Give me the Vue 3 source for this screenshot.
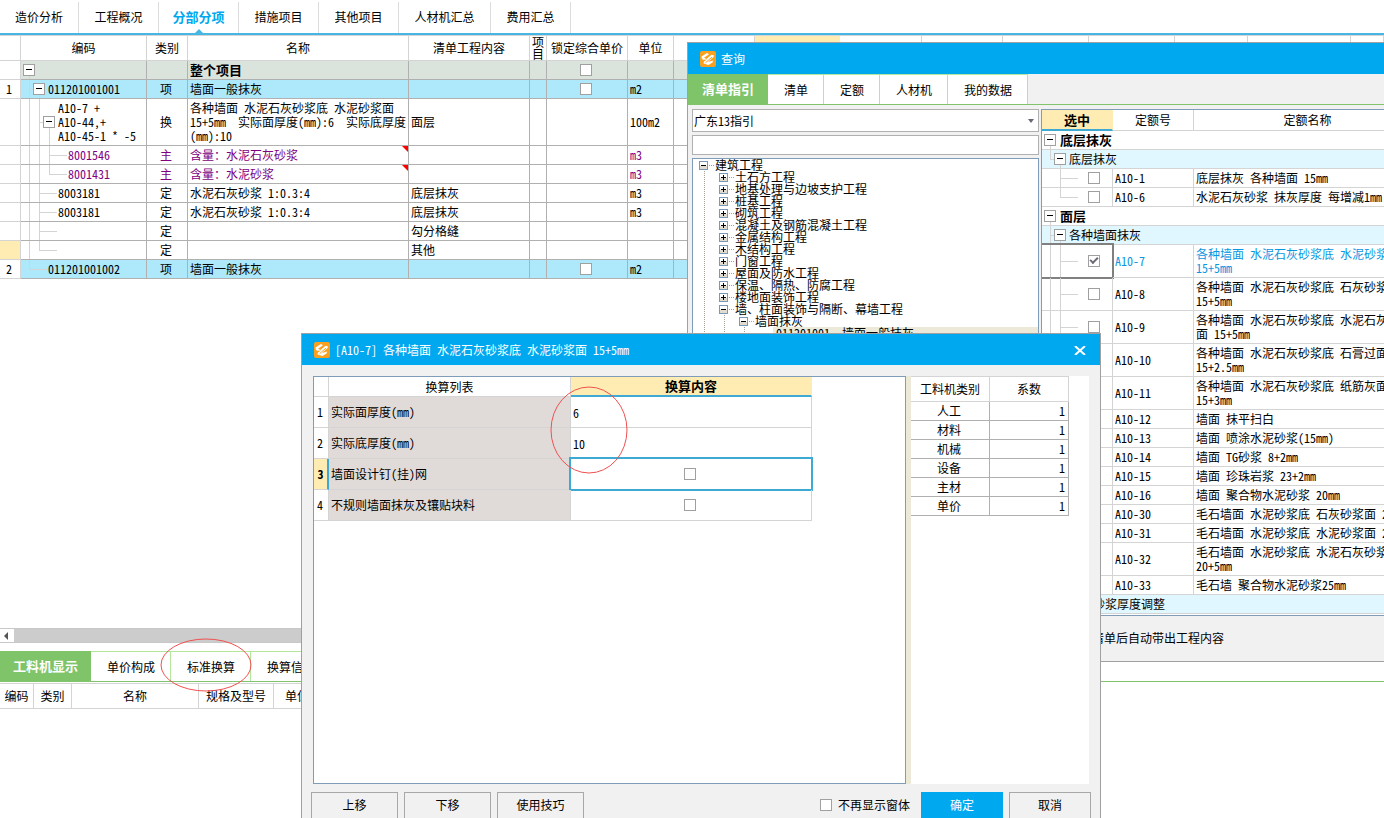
<script setup>
import { ref } from 'vue'

const mainTabs = ['造价分析', '工程概况', '分部分项', '措施项目', '其他项目', '人材机汇总', '费用汇总']
const mainCols = [21, 126, 41, 221, 121, 17, 81, 46, 81, 85, 82, 81, 86, 86, 73, 103]
const mainHeads = ['', '编码', '类别', '名称', '清单工程内容', '项目', '锁定综合单价', '单位', '', '', '', '', '', '', '', '', '']

// guides: [x, 'full' | 'half' | 'low']; branch: [x, width]; box: x of the expander; pad: x of the text
const mainRows = [
  { kind: 'total', no: '', code: '', type: '', name: '整个项目', work: '', lock: true, unit: '', guides: [[8, 'low']], box: 2, pad: 17 },
  { kind: 'item', no: '1', code: '011201001001', type: '项', name: '墙面一般抹灰', work: '', lock: true, unit: 'm2', guides: [[8, 'full'], [18, 'low']], branch: [8, 4], box: 12, pad: 27 },
  { kind: 'tall', no: '', code: 'A10-7 +\nA10-44,+\nA10-45-1 * -5', type: '换', name: '各种墙面 水泥石灰砂浆底 水泥砂浆面\n15+5mm  实际面厚度(mm):6  实际底厚度\n(mm):10', work: '面层', unit: '100m2', guides: [[8, 'full'], [18, 'full'], [28, 'low']], branch: [18, 4], box: 22, pad: 37 },
  { kind: 'main', no: '', code: '8001546', type: '主', name: '含量：水泥石灰砂浆', work: '', unit: 'm3', flag: true, guides: [[8, 'full'], [18, 'full'], [28, 'full']], branch: [28, 18], pad: 47 },
  { kind: 'main', no: '', code: '8001431', type: '主', name: '含量：水泥砂浆', work: '', unit: 'm3', flag: true, guides: [[8, 'full'], [18, 'full'], [28, 'half']], branch: [28, 18], pad: 47 },
  { kind: '', no: '', code: '8003181', type: '定', name: '水泥石灰砂浆 1:0.3:4', work: '底层抹灰', unit: 'm3', guides: [[8, 'full'], [18, 'full']], branch: [18, 18], pad: 37 },
  { kind: '', no: '', code: '8003181', type: '定', name: '水泥石灰砂浆 1:0.3:4', work: '底层抹灰', unit: 'm3', guides: [[8, 'full'], [18, 'full']], branch: [18, 18], pad: 37 },
  { kind: '', no: '', code: '', type: '定', name: '', work: '勾分格缝', unit: '', guides: [[8, 'full'], [18, 'full']], branch: [18, 18], pad: 37 },
  { kind: 'current', no: '', code: '', type: '定', name: '', work: '其他', unit: '', guides: [[8, 'full'], [18, 'half']], branch: [18, 18], pad: 37 },
  { kind: 'item', no: '2', code: '011201001002', type: '项', name: '墙面一般抹灰', work: '', lock: true, unit: 'm2', guides: [[8, 'half']], branch: [8, 18], pad: 27 },
]

const detailTabs = ['工料机显示', '单价构成', '标准换算', '换算信息']
const detailCols = [34, 38, 127, 75, 47]
const detailHeads = ['编码', '类别', '名称', '规格及型号', '单位', '']

const queryTabs = ['清单指引', '清单', '定额', '人材机', '我的数据']
const keyword = ref('')
const guideTree = [
  { level: 0, text: '建筑工程', sign: '-' },
  ...['土石方工程', '地基处理与边坡支护工程', '桩基工程', '砌筑工程', '混凝土及钢筋混凝土工程', '金属结构工程', '木结构工程', '门窗工程', '屋面及防水工程', '保温、隔热、防腐工程', '楼地面装饰工程']
    .map((text) => ({ level: 1, text, sign: '+' })),
  { level: 1, text: '墙、柱面装饰与隔断、幕墙工程', sign: '-' },
  { level: 2, text: '墙面抹灰', sign: '-' },
  { level: 3, text: '011201001  墙面一般抹灰', sign: '' },
]

const quota = (code, name, extra = {}) => ({ code, name, guides: [[8, 'full'], [18, 'full']], ...extra })
const quotaRows = [
  { section: '底层抹灰' },
  { group: '底层抹灰', guides: [[8, 'half'], [18, 'low']] },
  quota('A10-1', '底层抹灰 各种墙面 15mm', { guides: [[18, 'full']] }),
  quota('A10-6', '水泥石灰砂浆 抹灰厚度 每增减1mm', { guides: [[18, 'half']] }),
  { section: '面层' },
  { group: '各种墙面抹灰', guides: [[8, 'full'], [18, 'low']] },
  quota('A10-7', '各种墙面 水泥石灰砂浆底 水泥砂浆面\n15+5mm', { checked: true }),
  quota('A10-8', '各种墙面 水泥石灰砂浆底 石灰砂浆面\n15+5mm'),
  quota('A10-9', '各种墙面 水泥石灰砂浆底 水泥石灰砂浆\n面 15+5mm'),
  quota('A10-10', '各种墙面 水泥石灰砂浆底 石膏过面\n15+2.5mm'),
  quota('A10-11', '各种墙面 水泥石灰砂浆底 纸筋灰面\n15+3mm'),
  quota('A10-12', '墙面 抹平扫白'),
  quota('A10-13', '墙面 喷涂水泥砂浆(15mm)'),
  quota('A10-14', '墙面 TG砂浆 8+2mm'),
  quota('A10-15', '墙面 珍珠岩浆 23+2mm'),
  quota('A10-16', '墙面 聚合物水泥砂浆 20mm'),
  quota('A10-30', '毛石墙面 水泥砂浆底 石灰砂浆面 20mm'),
  quota('A10-31', '毛石墙面 水泥砂浆底 水泥砂浆面 20mm'),
  quota('A10-32', '毛石墙面 水泥砂浆底 水泥石灰砂浆面\n20+5mm'),
  quota('A10-33', '毛石墙 聚合物水泥砂浆25mm', { guides: [[8, 'full'], [18, 'half']] }),
  { group: '砂浆厚度调整', guides: [[8, 'full'], [18, 'low']], late: true },
]

const convertRows = ref([
  { label: '实际面厚度(mm)', value: '6' },
  { label: '实际底厚度(mm)', value: '10' },
  { label: '墙面设计钉(挂)网', check: true, current: true },
  { label: '不规则墙面抹灰及镶贴块料', check: true },
])
const factors = ['人工', '材料', '机械', '设备', '主材', '单价']
</script>

<template>
  <div class="app">
    <nav class="main-tabs">
      <a v-for="(t, i) in mainTabs" :key="t" href="#" :class="{ on: i === 2, wide: i === 5 }">{{ t }}</a>
    </nav>

    <main class="upper">
      <table class="grid main-grid">
        <colgroup>
          <col v-for="(w, i) in mainCols" :key="i" :style="{ width: w + 'px' }" />
          <col />
        </colgroup>
        <thead>
          <tr>
            <th v-for="(h, i) in mainHeads" :key="i" :class="{ hot: i === 9 }">{{ h }}</th>
          </tr>
        </thead>
        <tbody>
          <tr v-for="(r, i) in mainRows" :key="i" :class="r.kind">
            <td class="no">{{ r.no }}</td>
            <td class="tree-cell">
              <svg class="guides" aria-hidden="true">
                <rect v-for="g in r.guides" :key="g[0]" :x="g[0]" :y="g[1] === 'low' ? '50%' : 0" width="1" :height="g[1] === 'full' ? '100%' : '50%'" />
                <rect v-if="r.branch" :x="r.branch[0]" y="50%" :width="r.branch[1]" height="1" />
              </svg>
              <button v-if="r.box" class="expander" aria-label="折叠" :style="{ left: r.box + 'px' }"></button>
              <div class="code" :style="{ paddingLeft: r.pad + 'px' }">{{ r.code }}</div>
            </td>
            <td class="mid">{{ r.type }}</td>
            <td class="name">{{ r.name }}<i v-if="r.flag" class="flag"></i></td>
            <td>{{ r.work }}</td>
            <td></td>
            <td class="mid"><input v-if="r.lock" type="checkbox" class="cb" aria-label="锁定综合单价" /></td>
            <td>{{ r.unit }}</td>
            <td v-for="n in 9" :key="n"></td>
          </tr>
        </tbody>
      </table>
    </main>

    <div class="hscroll">
      <button aria-label="向左滚动"><svg width="6" height="8" viewBox="0 0 6 8"><path d="M5 0v8L1 4z" fill="#555" /></svg></button>
      <div class="thumb"></div>
    </div>

    <section class="lower">
      <nav class="green-tabs">
        <a v-for="(t, i) in detailTabs" :key="t" href="#" :class="{ on: i === 0 }">{{ t }}</a>
        <span class="fill"></span>
      </nav>
      <table class="grid detail-grid">
        <colgroup>
          <col v-for="(w, i) in detailCols" :key="i" :style="{ width: w + 'px' }" />
          <col />
        </colgroup>
        <thead>
          <tr><th v-for="h in detailHeads" :key="h">{{ h }}</th></tr>
        </thead>
      </table>
    </section>

    <section class="window query">
      <header class="titlebar">
        <svg class="logo" width="16" height="16" viewBox="0 0 16 16" aria-hidden="true">
          <rect width="16" height="16" rx="2" fill="#f9a01f" />
          <path d="M1.500 5.500 7 2l2 1.200-5 3.600L6.500 8 11.500 3.800 14 4.500 13.500 6 8 11 13.200 9.500 12.500 11.500 8.500 14 3.500 12.500 4 10.500 7 8.500 3 8.800 1.800 7.500z" fill="#fff" />
          <path d="M5.500 11.800 12 6" stroke="#f9a01f" stroke-width="1" fill="none" />
        </svg>
        <span>查询</span>
      </header>
      <nav class="green-tabs">
        <a v-for="(t, i) in queryTabs" :key="t" href="#" :class="{ on: i === 0 }">{{ t }}</a>
      </nav>
      <div class="query-body">
        <div class="guide-pane">
          <div class="combo">
            <select aria-label="指引"><option>广东13指引</option></select>
            <svg width="6" height="4" viewBox="0 0 6 4" aria-hidden="true"><path d="M0 0h6L3 4z" fill="#666a73" /></svg>
          </div>
          <input v-model="keyword" class="search" type="text" aria-label="查找" />
          <ul class="guide-tree">
            <li v-for="n in guideTree" :key="n.text" :class="'l' + n.level">
              <svg class="dots" aria-hidden="true">
                <line v-for="k in n.level" :key="k" :x1="k * 20 - 9" :x2="k * 20 - 9" y1="0" y2="12" />
                <line v-if="n.sign" :x1="n.level * 20 + 16" :x2="n.level * 20 + 21" y1="6" y2="6" />
              </svg>
              <svg v-if="n.sign" class="sign" width="9" height="9" viewBox="0 0 9 9" shape-rendering="crispEdges" aria-hidden="true">
                <rect width="9" height="9" fill="#7898b5" />
                <rect x="1" y="1" width="7" height="4" fill="#fff" />
                <rect x="1" y="5" width="7" height="3" fill="#e0ddd0" />
                <rect x="2" y="4" width="5" height="1" />
                <rect v-if="n.sign === '+'" x="4" y="2" width="1" height="5" />
              </svg>
              <span>{{ n.text }}</span>
            </li>
          </ul>
        </div>
        <div class="quota-pane">
          <table class="grid quota-grid">
            <colgroup><col class="c1" /><col class="c2" /><col /></colgroup>
            <thead>
              <tr><th class="hot">选中</th><th>定额号</th><th>定额名称</th></tr>
            </thead>
            <tbody>
              <template v-for="(r, i) in quotaRows" :key="i">
                <tr v-if="r.section" class="section">
                  <td colspan="3" class="tree-cell">
                    <svg class="guides" aria-hidden="true"><rect x="8" y="50%" width="1" height="50%" /></svg>
                    <button class="expander" aria-label="折叠"></button>
                    <b>{{ r.section }}</b>
                  </td>
                </tr>
                <tr v-else-if="r.group" class="group">
                  <td colspan="3" class="tree-cell" :class="{ late: r.late }">
                    <svg class="guides" aria-hidden="true">
                      <rect v-for="g in r.guides" :key="g[0]" :x="g[0]" :y="g[1] === 'low' ? '50%' : 0" width="1" :height="g[1] === 'full' ? '100%' : '50%'" />
                      <rect x="8" y="50%" width="4" height="1" />
                    </svg>
                    <button class="expander" aria-label="折叠"></button>
                    <span>{{ r.group }}</span>
                  </td>
                </tr>
                <tr v-else :class="{ double: r.name.includes('\n'), picked: r.checked }">
                  <td class="tree-cell pick">
                    <svg class="guides" aria-hidden="true">
                      <rect v-for="g in r.guides" :key="g[0]" :x="g[0]" y="0" width="1" :height="g[1] === 'full' ? '100%' : '50%'" />
                      <rect x="18" y="50%" width="18" height="1" />
                    </svg>
                    <input type="checkbox" class="cb" :checked="r.checked" :aria-label="r.code" />
                  </td>
                  <td>{{ r.code }}</td>
                  <td>{{ r.name }}</td>
                </tr>
              </template>
            </tbody>
          </table>
        </div>
      </div>
      <footer class="query-foot">清单后自动带出工程内容</footer>
    </section>

    <section class="window dialog">
      <header class="titlebar">
        <svg class="logo" width="16" height="16" viewBox="0 0 16 16" aria-hidden="true">
          <rect width="16" height="16" rx="2" fill="#f9a01f" />
          <path d="M1.500 5.500 7 2l2 1.200-5 3.600L6.500 8 11.500 3.800 14 4.500 13.500 6 8 11 13.200 9.500 12.500 11.500 8.500 14 3.500 12.500 4 10.500 7 8.500 3 8.800 1.800 7.500z" fill="#fff" />
          <path d="M5.500 11.800 12 6" stroke="#f9a01f" stroke-width="1" fill="none" />
        </svg>
        <span>[A10-7] 各种墙面 水泥石灰砂浆底 水泥砂浆面 15+5mm</span>
        <button class="close" aria-label="关闭">
          <svg width="12" height="9" viewBox="0 0 12 9"><path d="M1 0 11 9M11 0 1 9" stroke="#fff" stroke-width="2" /></svg>
        </button>
      </header>
      <div class="dialog-body">
        <div class="convert-pane">
          <table class="grid convert-grid">
            <colgroup><col class="c1" /><col class="c2" /><col class="c3" /></colgroup>
            <thead>
              <tr><th></th><th>换算列表</th><th class="hot">换算内容</th></tr>
            </thead>
            <tbody>
              <tr v-for="(r, i) in convertRows" :key="i" :class="{ current: r.current }">
                <td class="no">{{ i + 1 }}</td>
                <td class="label"><label :for="'conv' + i">{{ r.label }}</label></td>
                <td class="value" :class="{ mid: r.check }">
                  <input v-if="r.check" :id="'conv' + i" type="checkbox" class="cb" />
                  <input v-else :id="'conv' + i" v-model="r.value" type="text" />
                </td>
              </tr>
            </tbody>
          </table>
        </div>
        <div class="factor-pane">
          <table class="grid factor-grid">
            <thead><tr><th>工料机类别</th><th>系数</th></tr></thead>
            <tbody>
              <tr v-for="f in factors" :key="f"><td class="mid">{{ f }}</td><td class="num">1</td></tr>
            </tbody>
          </table>
        </div>
      </div>
      <footer class="dialog-foot">
        <button>上移</button>
        <button>下移</button>
        <button>使用技巧</button>
        <label><input type="checkbox" class="cb" />不再显示窗体</label>
        <button class="ok">确定</button>
        <button class="cancel">取消</button>
      </footer>
    </section>

    <svg class="ring ring-tab" viewBox="0 0 92 56" aria-hidden="true"><ellipse cx="46" cy="28" rx="45" ry="26" /></svg>
    <svg class="ring ring-value" viewBox="0 0 78 88" aria-hidden="true"><ellipse cx="39" cy="44" rx="38" ry="43" /></svg>
  </div>
</template>

<style>
body {
  background: #fff;
  overflow: hidden;
}
</style>

<style scoped>
.app {
  position: relative;
  display: flex;
  flex-direction: column;
  height: 100vh;
  overflow: hidden;
  background: #fff;
  color: #000;
  font: 12px/14px "Noto Sans Mono CJK SC", "Noto Sans CJK SC", "Liberation Sans", sans-serif;
}
.app *,
.app *::before,
.app *::after {
  box-sizing: border-box;
}
a {
  color: inherit;
  text-decoration: none;
}
button,
input,
select {
  margin: 0;
  padding: 0;
  font: inherit;
  color: inherit;
  border-radius: 0;
}

/* top tabs */
.main-tabs {
  display: flex;
  height: 35px;
  padding-top: 2px;
  border-bottom: 2px solid #46b6e4;
}
.main-tabs a {
  position: relative;
  width: 80px;
  border-right: 1px solid #dcdcdc;
  text-align: center;
  line-height: 30px;
}
.main-tabs a:first-child {
  width: 79px;
}
.main-tabs a.wide {
  width: 92px;
}
.main-tabs a.on {
  color: #00a8f0;
  font-size: 13px;
  font-weight: bold;
}
.main-tabs a.on::after {
  content: "";
  position: absolute;
  left: 36px;
  bottom: 0;
  border: 4px solid transparent;
  border-top-width: 0;
  border-bottom-color: #46b6e4;
}

/* grids */
.grid {
  border-spacing: 0;
  table-layout: fixed;
}
.grid th,
.grid td {
  position: relative;
  height: 19px;
  padding: 0 0 0 2px;
  border: solid #b0b0b0;
  border-width: 0 1px 1px 0;
  text-align: left;
  white-space: pre;
}
.grid th {
  padding: 0;
  border-color: #d4d4d4;
  font-weight: normal;
  text-align: center;
}
.grid th.hot {
  background: #ffecb3;
  border-right-color: #ffecb3;
  border-bottom: 2px solid #3eaad3;
  font-size: 13px;
  font-weight: bold;
}
.grid .mid {
  padding: 0 2px 0 0;
  text-align: center;
}
.grid .no {
  padding: 0 2px 0 0;
  border-color: #d4d4d4;
  text-align: center;
}
.guides {
  position: absolute;
  left: 0;
  top: 0;
  width: 100%;
  height: 100%;
  fill: #d4d4d4;
}
.expander {
  position: absolute;
  top: 50%;
  left: 2px;
  width: 12px;
  height: 12px;
  margin-top: -6px;
  border: 1px solid #a0a0a0;
  background: #fff;
}
.expander::before {
  content: "";
  position: absolute;
  left: 2px;
  top: 4px;
  width: 6px;
  height: 1px;
  background: #000;
}
.cb {
  appearance: none;
  display: block;
  width: 12px;
  height: 12px;
  margin: 0 auto;
  border: 1px solid #a0a0a0;
  background: #fff;
}
.cb:checked::after {
  content: "";
  display: block;
  width: 8px;
  height: 5px;
  margin: 1px;
  border: solid #6a6a78;
  border-width: 0 0 2px 2px;
  transform: rotate(-45deg);
}

.upper {
  flex: 1;
  min-height: 0;
  overflow: hidden;
}
.main-grid {
  width: 100%;
  border-top: 1px solid #d4d4d4;
}
.main-grid th {
  height: 25px;
  line-height: 12px;
  white-space: normal;
}
.main-grid .tall td {
  height: 47px;
}
.main-grid .tree-cell {
  padding: 0;
}
.code {
  position: relative;
  pointer-events: none;
}
.main-grid .total td:not(.no) {
  background: #dbe3dd;
}
.main-grid .total .name {
  font-size: 13px;
  font-weight: bold;
}
.main-grid .item td:not(.no) {
  background: #ade8fb;
}
.main-grid .main td {
  color: #800080;
}
.main-grid .current .no {
  background: #ffecb3;
}
.flag {
  position: absolute;
  right: 0;
  top: 0;
  border: 3px solid #f00;
  border-left-color: transparent;
  border-bottom-color: transparent;
}

.hscroll {
  display: flex;
  height: 15px;
  border: solid #c8c8c8;
  border-width: 1px 0;
  margin-bottom: 8px;
}
.hscroll button {
  display: flex;
  align-items: center;
  justify-content: center;
  width: 12px;
  border: 0;
  background: #fff;
}
.thumb {
  flex: 1;
  margin-left: 2px;
  background: #ccc;
}

.lower {
  flex: 0 0 167px;
}
.green-tabs {
  display: flex;
  height: 31px;
  border-bottom: 1px solid #82c46c;
}
.green-tabs a {
  padding: 0 15px 0 16px;
  border: solid #b4e69c;
  border-width: 1px 1px 0 0;
  background: #fff;
  line-height: 30px;
}
.green-tabs a.on {
  min-width: 80px;
  padding: 0 13px;
  border: 0;
  background: #80c46a;
  color: #fff;
  font-size: 13px;
  font-weight: bold;
  text-align: center;
  line-height: 30px;
}
.green-tabs .fill {
  flex: 1;
  border-top: 1px solid #b4e69c;
}
.detail-grid {
  width: 321px;
  margin-top: 1px;
  border-top: 1px solid #d4d4d4;
}
.detail-grid th {
  height: 25px;
}

/* windows */
.window {
  position: absolute;
  display: flex;
  flex-direction: column;
  border: 1px solid #a0a0a0;
  background: #f1f1f1;
}
.titlebar {
  display: flex;
  align-items: center;
  height: 31px;
  padding-left: 12px;
  background: #00a8f0;
  color: #fff;
}
.titlebar span {
  flex: 1;
  padding-left: 5px;
  white-space: pre;
}
.close {
  width: 40px;
  height: 31px;
  border: 0;
  background: none;
}

.query {
  left: 687px;
  right: -40px;
  top: 42px;
  height: 620px;
}
.query-body {
  flex: 1;
  display: flex;
  gap: 2px;
  min-height: 0;
  padding: 4px 0 0 4px;
}
.guide-pane {
  display: flex;
  flex-direction: column;
  gap: 3px;
  width: 347px;
}
.combo {
  position: relative;
  height: 23px;
}
.combo select {
  appearance: none;
  width: 100%;
  height: 23px;
  padding-left: 1px;
  border: 1px solid #b0b0b0;
  background: #fff;
}
.combo svg {
  position: absolute;
  right: 5px;
  top: 10px;
}
.search {
  height: 20px;
  border: 1px solid #b0b0b0;
  background: #fff;
}
.guide-tree {
  flex: 1;
  min-height: 0;
  margin: 0;
  padding: 0;
  overflow: hidden;
  border: 1px solid #7f9db9;
  background: #fff;
  list-style: none;
}
.guide-tree li {
  position: relative;
  display: flex;
  align-items: center;
  gap: 7px;
  height: 12px;
  padding-left: 6px;
  line-height: 12px;
  white-space: pre;
}
.guide-tree .l1 {
  padding-left: 26px;
}
.guide-tree .l2 {
  padding-left: 46px;
}
.guide-tree .l3 {
  padding-left: 80px;
}
.guide-tree .l3 span {
  flex: 1;
  padding-left: 3px;
  background: #ece9d8;
}
.sign {
  position: relative;
  flex: none;
}
.dots {
  position: absolute;
  left: 0;
  top: 0;
  width: 100px;
  height: 12px;
  stroke: #a5a294;
  stroke-dasharray: 1 1;
  shape-rendering: crispEdges;
}
.quota-pane {
  flex: 1;
  min-width: 0;
  overflow: hidden;
  border: 1px solid #7f9db9;
  background: #fff;
}
.quota-grid {
  width: 100%;
}
.quota-grid .c1 {
  width: 71px;
}
.quota-grid .c2 {
  width: 81px;
}
.quota-grid th {
  height: 21px;
}
.quota-grid td {
  border-color: #d4d4d4;
}
.quota-grid .double td {
  height: 33px;
}
.quota-grid .section td {
  padding-left: 18px;
}
.quota-grid .section b {
  font-size: 13px;
}
.quota-grid .group td {
  padding-left: 27px;
  background: #e1f7ff;
}
.quota-grid .group .expander {
  left: 12px;
}
.quota-grid .group td.late {
  padding-left: 51px;
}
.quota-grid .pick {
  padding-left: 46px;
}
.quota-grid .cb {
  position: relative;
  margin: 0;
}
.quota-grid .picked td {
  color: #0a96e0;
}
.quota-grid .picked .pick::after {
  content: "";
  position: absolute;
  inset: -2px -2px -2px -2px;
  border: 2px solid #808080;
  pointer-events: none;
}
.query-foot {
  height: 45px;
  padding-left: 404px;
  line-height: 44px;
}

.dialog {
  left: 301px;
  top: 333px;
  width: 800px;
  height: 498px;
}
.dialog-body {
  flex: 1;
  display: flex;
  min-height: 0;
  margin: 11px 11px 0;
  background: #ece9d8;
}
.convert-pane {
  width: 593px;
  margin-right: 5px;
  border: 1px solid #7f9db9;
  background: #fff;
}
.convert-grid .c1 {
  width: 15px;
}
.convert-grid .c2 {
  width: 242px;
}
.convert-grid .c3 {
  width: 241px;
}
.convert-grid {
  width: 498px;
}
.convert-grid th {
  height: 20px;
}
.convert-grid td {
  height: 31px;
  border-color: #d4d4d4;
}
.convert-grid .label {
  background: #e0dbd9;
}
.convert-grid .value input[type="text"] {
  display: block;
  width: 100%;
  height: 30px;
  border: 0;
  background: transparent;
}
.convert-grid .current .no {
  padding-right: 0;
  border-right: 2px solid #3eaad3;
  background: #ffecb3;
  font-weight: bold;
}
.convert-grid .current .value::after {
  content: "";
  position: absolute;
  inset: -2px;
  border: 2px solid #3eaad3;
  pointer-events: none;
}
.factor-pane {
  flex: 1;
  background: #fff;
}
.factor-grid {
  width: 158px;
  border-top: 1px solid #d4d4d4;
}
.factor-grid th {
  height: 25px;
}
.factor-grid .num {
  padding-right: 3px;
  text-align: right;
}
.dialog-foot {
  display: flex;
  align-items: center;
  height: 46px;
  padding: 0 9px 4px;
}
.dialog-foot button {
  width: 87px;
  height: 27px;
  margin-right: 6px;
  border: 1px solid #a8a8a8;
  background: #f1f1f1;
}
.dialog-foot label {
  display: flex;
  align-items: center;
  gap: 6px;
  margin-left: auto;
}
.dialog-foot button.ok {
  width: 82px;
  margin-left: 11px;
  border-color: #00a8f0;
  background: #00a8f0;
  color: #fff;
}
.dialog-foot button.cancel {
  width: 82px;
  margin-right: 0;
}

.ring {
  position: absolute;
  fill: none;
  stroke: #f05050;
  pointer-events: none;
}
.ring-tab {
  left: 160px;
  top: 637px;
  width: 92px;
  height: 56px;
}
.ring-value {
  left: 550px;
  top: 386px;
  width: 78px;
  height: 88px;
}
</style>
